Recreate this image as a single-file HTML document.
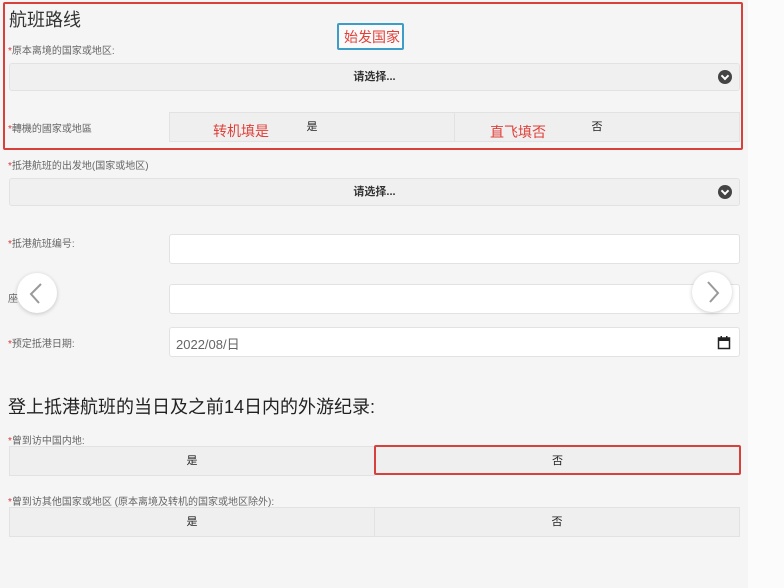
<!DOCTYPE html>
<html><head><meta charset="utf-8"><style>
*{margin:0;padding:0;box-sizing:border-box}
body{width:784px;height:588px;background:#fbfbfb;position:relative;overflow:hidden;font-family:"Liberation Sans","Noto Sans CJK SC",sans-serif;color:#333}
.bg{position:absolute;left:0;top:0;width:748px;height:588px;background:#f5f5f5}
.a{position:absolute}
.lbl{font-size:10px;color:#666}
.lbl b{color:#d33;font-weight:normal}
.sel{background:#f0f0f0;border:1px solid #e2e2e2;border-radius:3px;height:28px;font-size:11px;font-weight:bold;text-align:center;line-height:26px;color:#333}
.chev{position:absolute;right:7px;top:6px;width:14px;height:14px;border-radius:50%;background:#444}
.chev:after{content:"";position:absolute;left:4px;top:3px;width:4px;height:4px;border-right:2px solid #fff;border-bottom:2px solid #fff;transform:rotate(45deg)}
.inp{background:#fff;border:1px solid #e2e2e2;border-radius:3px;height:30px}
.seg{background:#efefef;border:1px solid #e2e2e2;height:30px;font-size:11px;text-align:center;line-height:28px;color:#222}
.red{color:#e0403a;font-size:14px}
.circ{width:40px;height:40px;border-radius:50%;background:#fff;box-shadow:0 1px 4px rgba(0,0,0,.2)}
</style></head><body>
<div class="bg"></div>
<div class="a" style="left:9px;top:6px;font-size:18px;color:#333">航班路线</div>
<div class="a lbl" style="left:8px;top:42px"><b>*</b>原本离境的国家或地区:</div>
<div class="a sel" style="left:9px;top:63px;width:731px">请选择...<span class="chev"></span></div>
<div class="a lbl" style="left:8px;top:120px"><b>*</b>轉機的國家或地區</div>
<div class="a seg" style="left:169px;top:112px;width:286px">是</div>
<div class="a seg" style="left:454px;top:112px;width:286px">否</div>
<div class="a red" style="left:213px;top:121px">转机填是</div>
<div class="a red" style="left:490px;top:122px">直飞填否</div>
<div class="a" style="left:3px;top:2px;width:740px;height:148px;border:2px solid #d8403c;border-radius:2px"></div>
<div class="a red" style="left:337px;top:23px;width:67px;height:27px;border:2px solid #3d9dc6;border-radius:2px;padding:2px 0 0 5px;background:#fafafa">始发国家</div>
<div class="a lbl" style="left:8px;top:157px"><b>*</b>抵港航班的出发地(国家或地区)</div>
<div class="a sel" style="left:9px;top:178px;width:731px">请选择...<span class="chev"></span></div>
<div class="a lbl" style="left:8px;top:235px"><b>*</b>抵港航班编号:</div>
<div class="a inp" style="left:169px;top:234px;width:571px"></div>
<div class="a lbl" style="left:8px;top:290px">座</div>
<div class="a inp" style="left:169px;top:284px;width:571px"></div>
<div class="a lbl" style="left:8px;top:335px"><b>*</b>预定抵港日期:</div>
<div class="a inp" style="left:169px;top:327px;width:571px;font-size:13px;color:#666;padding:6px 0 0 6px">2022/08/日
<svg style="position:absolute;right:8px;top:7px" width="14" height="15" viewBox="0 0 14 15"><rect x="1.5" y="3" width="11" height="10.5" fill="none" stroke="#222" stroke-width="1.5"/><rect x="1.5" y="3" width="11" height="3" fill="#222"/><rect x="3.5" y="1" width="1.5" height="3" fill="#222"/><rect x="9" y="1" width="1.5" height="3" fill="#222"/></svg></div>
<div class="a circ" style="left:17px;top:273px"><svg width="40" height="40"><path d="M24 11 L14 21 L22 30" fill="none" stroke="#999" stroke-width="2"/></svg></div>
<div class="a circ" style="left:692px;top:272px"><svg width="40" height="40"><path d="M16 10 L26 21 L18 30" fill="none" stroke="#999" stroke-width="2"/></svg></div>
<div class="a" style="left:8px;top:393px;font-size:18px;color:#222">登上抵港航班的当日及之前14日内的外游纪录:</div>
<div class="a lbl" style="left:8px;top:432px"><b>*</b>曾到访中国内地:</div>
<div class="a seg" style="left:9px;top:446px;width:366px">是</div>
<div class="a seg" style="left:374px;top:445px;width:367px;border:2px solid #d8403c;border-radius:2px;height:30px">否</div>
<div class="a lbl" style="left:8px;top:493px"><b>*</b>曾到访其他国家或地区 (原本离境及转机的国家或地区除外):</div>
<div class="a seg" style="left:9px;top:507px;width:366px">是</div>
<div class="a seg" style="left:374px;top:507px;width:366px">否</div>
</body></html>
